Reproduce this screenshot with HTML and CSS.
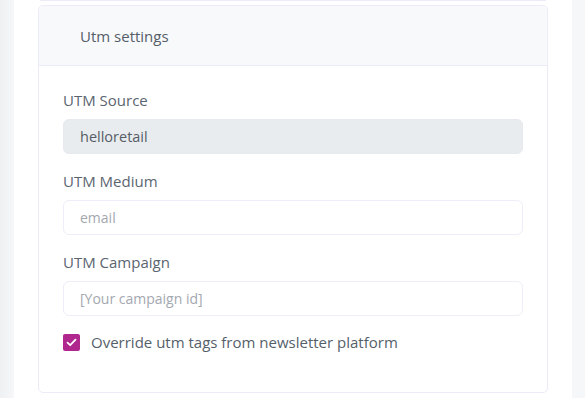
FILE: index.html
```html
<!DOCTYPE html>
<html lang="en">
<head>
  <meta charset="UTF-8">
  <meta name="viewport" content="width=device-width, initial-scale=1.0">
  <title>Utm settings</title>
  <link rel="stylesheet" href="styles.css">
</head>
<body>
  <div class="page">
    <div class="panel">
      <div class="prev-card"></div>

      <div class="card">
        <div class="card-header">Utm settings</div>
        <div class="card-body">
          <!-- Source -->
          <div class="form-group">
            <label for="utmSource">UTM Source</label>
            <input type="text" id="utmSource" value="helloretail" readonly class="readonly">
          </div>

          <!-- Medium -->
          <div class="form-group">
            <label for="utmMedium">UTM Medium</label>
            <input type="text" id="utmMedium" placeholder="email">
          </div>

          <!-- Campaign -->
          <div class="form-group">
            <label for="utmCampaign">UTM Campaign</label>
            <input type="text" id="utmCampaign" placeholder="[Your campaign id]">
          </div>

          <!-- Override -->
          <label class="check">
            <span class="box">
              <svg width="11" height="9" viewBox="0 0 11 9"><path d="M1.5 4.6 L4.2 7.2 L9.5 1.6" fill="none" stroke="#fff" stroke-width="1.8" stroke-linecap="round" stroke-linejoin="round"/></svg>
            </span>
            Override utm tags from newsletter platform
          </label>
        </div>
      </div>
    </div>
  </div>
</body>
</html>
```

FILE: styles.css
```css
/* Page */
body {
  margin: 0;
  padding: 0;
  font-family: "Open Sans", Arial, sans-serif;
  background-color: #f6f7f9;
  color: #5b6570;
}

.page {
  display: flex;
  height: 398px;
  overflow: hidden;
  padding-left: 14px;
  background: linear-gradient(to right, #eef0f2 0, #f6f7f9 14px);
}

.panel {
  width: 558px;
  background-color: #fff;
  padding: 0 24px;
  box-sizing: border-box;
}

.prev-card {
  height: 1px;
  margin: 0 2px 4px;
  background-color: #ecebf8;
}

/* Card */
.card {
  border: 1px solid #ecebf8;
  border-radius: 5px;
  width: 510px;
  box-sizing: border-box;
}

.card-header {
  height: 59px;
  display: flex;
  align-items: center;
  padding-left: 41px;
  background-color: #f8f9fb;
  border-bottom: 1px solid #ecebf8;
  border-radius: 5px 5px 0 0;
  font-size: 15px;
  color: #545e69;
}

.card-body {
  padding: 24px 24px 41px;
}

.form-group {
  margin-bottom: 17px;
}

.form-group label {
  display: block;
  font-size: 15px;
  line-height: 21px;
  margin-bottom: 8px;
}

.form-group input {
  display: block;
  width: 100%;
  height: 35px;
  box-sizing: border-box;
  padding: 0 16px;
  font-family: inherit;
  font-size: 14px;
  color: #5b6570;
  border: 1px solid #eeedf9;
  border-radius: 6px;
  background-color: #fff;
  outline: none;
}

.form-group input::placeholder {
  color: #a4a8b0;
}

.form-group input.readonly {
  background-color: #e9ecef;
  border-color: #e6e9ee;
  color: #555d66;
  font-size: 14.5px;
}

/* Checkbox */
.check {
  display: flex;
  align-items: center;
  gap: 11px;
  font-size: 15px;
  line-height: 18px;
  color: #555f6a;
}

.box {
  width: 17px;
  height: 17px;
  border-radius: 2px;
  background-color: #b0288e;
  display: flex;
  align-items: center;
  justify-content: center;
}
```
